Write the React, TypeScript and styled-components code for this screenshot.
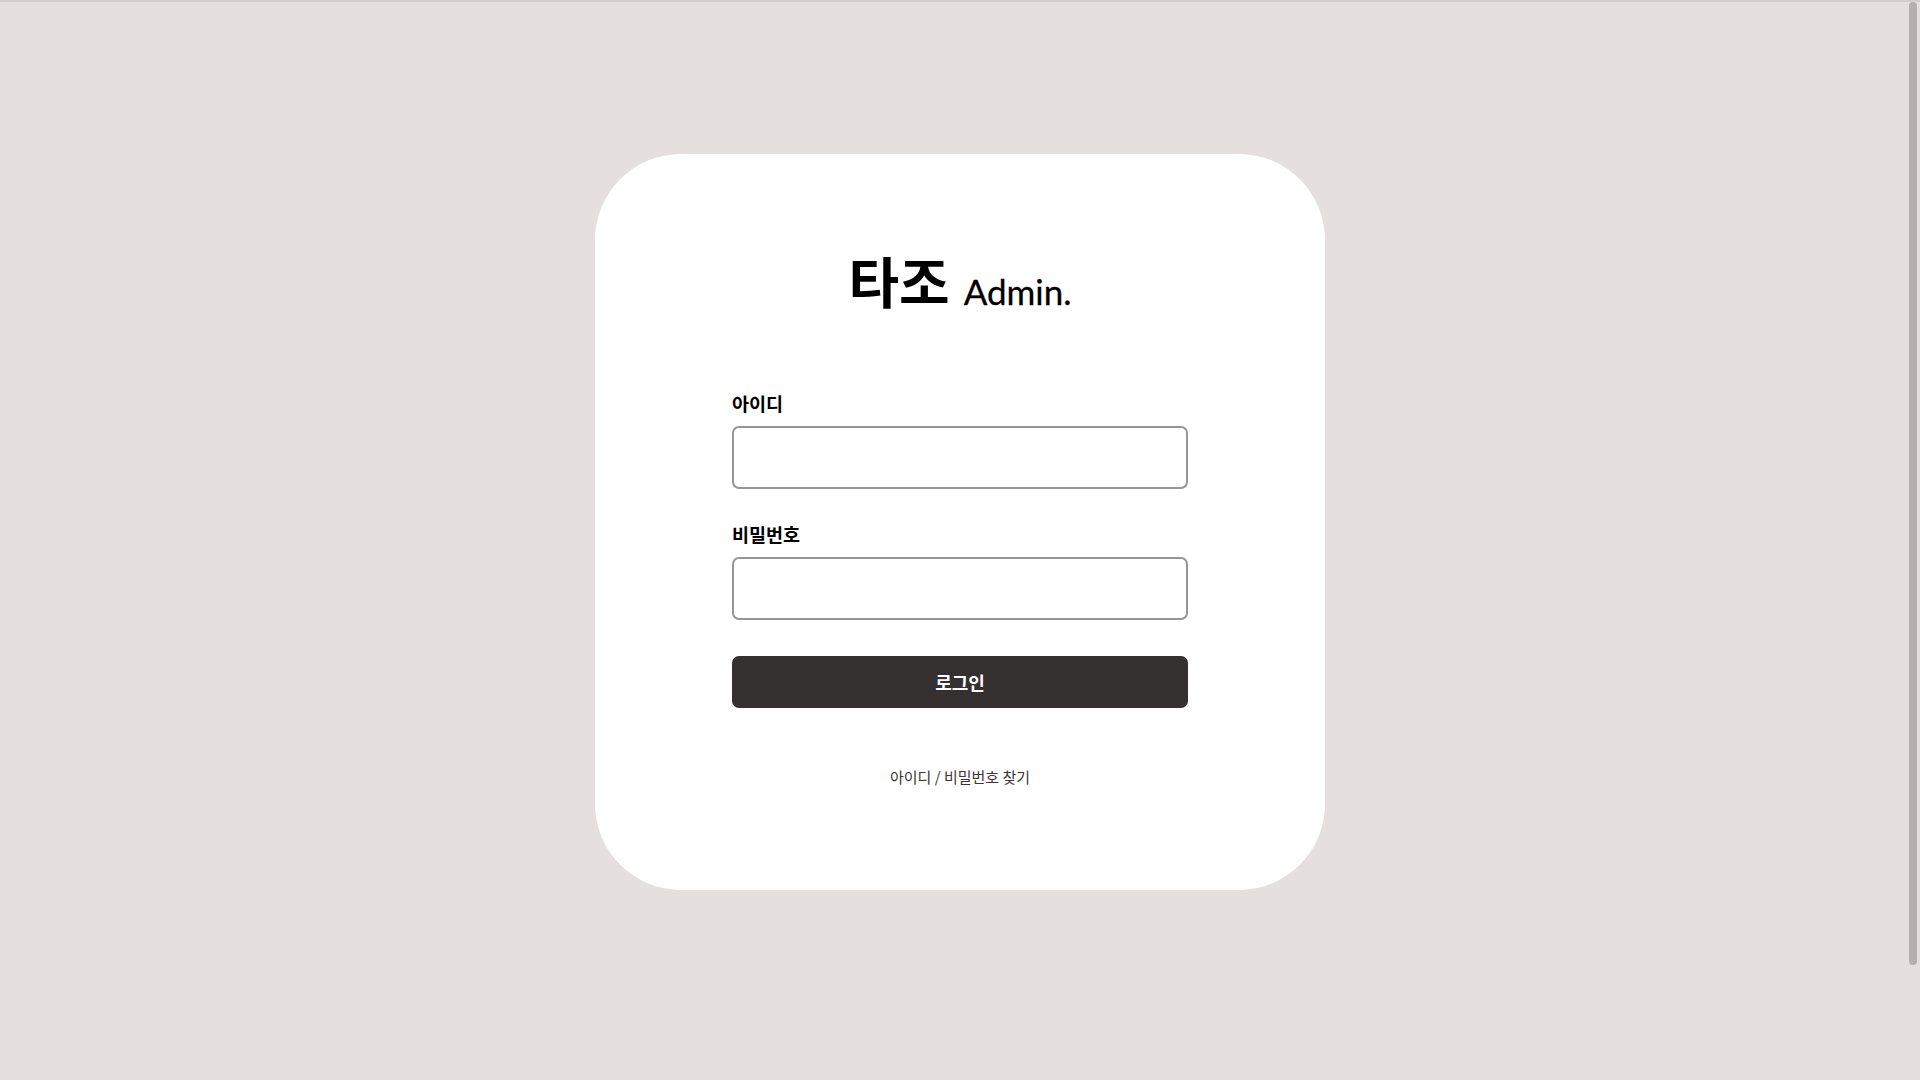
import React from "react";
import styled, { createGlobalStyle } from "styled-components";

const GlobalStyle = createGlobalStyle`
  html, body {
    margin: 0;
    padding: 0;
    height: 100%;
    overflow: hidden;
    background: #e5dfdf;
    font-family: "Noto Sans CJK KR", "Noto Sans", sans-serif;
  }
  * { box-sizing: border-box; }
`;

const Page = styled.div`
  height: 100vh;
  border-top: 2px solid #d4cece;
  background: #e5dfdf;
  display: flex;
  justify-content: center;
  align-items: flex-start;
  padding-top: 152px;
`;

const ScrollThumb = styled.div`
  position: fixed;
  top: 2px;
  right: 3px;
  width: 8px;
  height: 963px;
  border-radius: 4px;
  background: #b5b0b0;
`;

const Card = styled.div`
  width: 730px;
  height: 736px;
  background: #ffffff;
  border-radius: 86px;
  display: flex;
  flex-direction: column;
  align-items: center;
  padding-top: 98px;
`;

const Title = styled.h1`
  margin: 0;
  display: flex;
  align-items: baseline;
  gap: 14px;
  color: #000;
  line-height: 1;
`;

const Brand = styled.span`
  font-family: "Noto Sans CJK KR", sans-serif;
  font-weight: 700;
  font-size: 55px;
`;

const Suffix = styled.span`
  font-family: Lato, "Noto Sans", sans-serif;
  font-weight: 400;
  font-size: 35px;
  position: relative;
  top: 2px;
  -webkit-text-stroke: 0.3px #000;
`;

const Form = styled.form`
  width: 456px;
  margin-top: 85px;
  display: flex;
  flex-direction: column;
`;

const Field = styled.div<{ $gap?: number }>`
  display: flex;
  flex-direction: column;
  margin-top: ${(p) => p.$gap ?? 0}px;
`;

const Label = styled.label`
  font-size: 18.5px;
  line-height: 22px;
  font-weight: 700;
  color: #000;
  margin-bottom: 12px;
`;

const Input = styled.input`
  height: 63px;
  width: 100%;
  border: 2px solid #9a9595;
  border-radius: 7px;
  background: #fff;
  font-size: 18px;
  padding: 0 16px;
  outline: none;
`;

const Button = styled.button`
  margin-top: 36px;
  height: 52px;
  width: 100%;
  border: none;
  border-radius: 7px;
  background: #353030;
  color: #fff;
  font-family: "Noto Sans CJK KR", sans-serif;
  font-size: 18px;
  font-weight: 700;
  cursor: pointer;
`;

const FindLink = styled.a`
  margin-top: 59px;
  align-self: center;
  font-size: 15px;
  line-height: 20px;
  color: #3b3535;
  text-decoration: none;
  cursor: pointer;
`;

export default function App() {
  return (
    <>
      <GlobalStyle />
      <Page>
        <Card>
          <Title>
            <Brand>타조</Brand>
            <Suffix>Admin.</Suffix>
          </Title>
          <Form onSubmit={(e) => e.preventDefault()}>
            <Field>
              <Label htmlFor="uid">아이디</Label>
              <Input id="uid" type="text" />
            </Field>
            <Field $gap={34}>
              <Label htmlFor="pw">비밀번호</Label>
              <Input id="pw" type="password" />
            </Field>
            <Button type="submit">로그인</Button>
            <FindLink>아이디 / 비밀번호 찾기</FindLink>
          </Form>
        </Card>
      </Page>
      <ScrollThumb />
    </>
  );
}
